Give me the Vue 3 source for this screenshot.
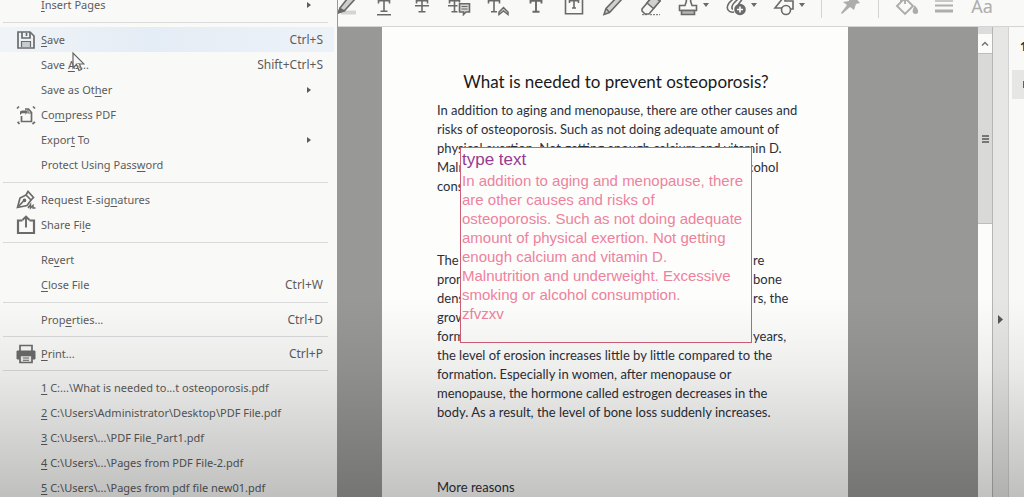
<script setup>
const menu = [
  { pre: '', key: 'I', post: 'nsert Pages', sub: true },
  { sep: true },
  { pre: '', key: 'S', post: 'ave', shortcut: 'Ctrl+S', icon: 'save', active: true },
  { pre: 'Save ', key: 'A', post: 's...', shortcut: 'Shift+Ctrl+S' },
  { pre: 'Save as Ot', key: 'h', post: 'er', sub: true },
  { pre: 'Co', key: 'm', post: 'press PDF', icon: 'compress' },
  { pre: 'Expor', key: 't', post: ' To', sub: true },
  { pre: 'Protect Using Pass', key: 'w', post: 'ord' },
  { sep: true },
  { pre: 'Request E-sig', key: 'n', post: 'atures', icon: 'sign' },
  { pre: 'Share Fi', key: 'l', post: 'e', icon: 'share' },
  { sep: true },
  { pre: 'Re', key: 'v', post: 'ert' },
  { pre: '', key: 'C', post: 'lose File', shortcut: 'Ctrl+W' },
  { sep: true },
  { pre: 'Prop', key: 'e', post: 'rties...', shortcut: 'Ctrl+D' },
  { sep: true, tight: true },
  { pre: '', key: 'P', post: 'rint...', shortcut: 'Ctrl+P', icon: 'print' },
  { sep: true, tight: true },
  { pre: '', key: '1', post: ' C:...\\What is needed to...t osteoporosis.pdf' },
  { pre: '', key: '2', post: ' C:\\Users\\Administrator\\Desktop\\PDF File.pdf' },
  { pre: '', key: '3', post: ' C:\\Users\\...\\PDF File_Part1.pdf' },
  { pre: '', key: '4', post: ' C:\\Users\\...\\Pages from PDF File-2.pdf' },
  { pre: '', key: '5', post: ' C:\\Users\\...\\Pages from pdf file new01.pdf' }
]

const textTools = ['highlight', 'underline', 'strike', 'replace', 'insert', 'text', 'textbox', 'pencil', 'eraser']
const dropTools = ['stamp', 'attach', 'shapes']

const intro = [
  'In addition to aging and menopause, there are other causes and',
  'risks of osteoporosis. Such as not doing adequate amount of',
  'physical exertion. Not getting enough calcium and vitamin D.',
  'Malnutrition and underweight. Excessive smoking or alcohol',
  'consumption.'
]
const wrapped = [
  ['The', 're'],
  ['pron', 'bone'],
  ['dens', 'rs, the'],
  ['grow', ''],
  ['form', 'years,']
]
const rest = [
  'the level of erosion increases little by little compared to the',
  'formation. Especially in women, after menopause or',
  'menopause, the hormone called estrogen decreases in the',
  'body. As a result, the level of bone loss suddenly increases.'
]
const note = [
  'In addition to aging and menopause, there',
  'are other causes and risks of',
  'osteoporosis. Such as not doing adequate',
  'amount of physical exertion. Not getting',
  'enough calcium and vitamin D.',
  'Malnutrition and underweight. Excessive',
  'smoking or alcohol consumption.',
  'zfvzxv'
]
</script>

<template>
  <div class="app">
    <nav class="menu" aria-label="File">
      <template v-for="(m, i) in menu" :key="i">
        <div v-if="m.sep" class="sep" :class="{ tight: m.tight }"></div>
        <button v-else class="item" :class="{ active: m.active }">
          <span class="slot">
            <svg v-if="m.icon" width="20" height="20" viewBox="0 0 20 20" fill="none" stroke="currentColor" stroke-width="1.7">
              <g v-if="m.icon === 'save'">
                <path d="M2 2H14L18 6V18H2Z" />
                <path d="M6 2V8H14V2M10.500 3V6" />
                <path d="M5.500 17V11.500H14.500V17" fill="#c9cccf" stroke-width="1.200" />
              </g>
              <g v-else-if="m.icon === 'compress'">
                <path d="M9 4H12.500L15.500 7.500V16.500H5.500V11" />
                <path d="M12 4V8H15.500" stroke-width="1.200" />
                <path d="M9.500 4L11.500 7L9.500 10V8.300H6L4 10V6.500L6 5.500H9.500Z" fill="currentColor" stroke="none" />
                <path d="M1 3.500L3 1.500M17 1.500L19 3.500M1.500 17L3.500 19M2.500 16.500V18.500M16.500 19L19 16.800" />
              </g>
              <g v-else-if="m.icon === 'sign'">
                <path d="M1.500 17.500L4 8L10 5L15 10L11 15.500Z" />
                <path d="M10 5L12 1.500L17.500 7.500L15 10M2 17L8 10.500" />
                <circle cx="8.500" cy="10.300" r="1" fill="currentColor" />
                <path d="M12 18L14.500 14.500V18L17 15.500V18H19.500" stroke-width="1.500" />
              </g>
              <g v-else-if="m.icon === 'share'" stroke-width="2.200">
                <path d="M6.500 5.500H2V18H18V5.500H13.500" />
                <path d="M10 12.500V2M6.500 5L10 1.500L13.500 5" stroke-width="1.900" />
              </g>
              <g v-else>
                <path d="M4 7V1.500H16V7" />
                <path d="M1 7H19V15H16V12H4V15H1Z" fill="currentColor" stroke-width="1" />
                <path d="M4 11.500H16V18.500H4Z" fill="#ededec" />
                <path d="M7 14H13M7 16.300H13" stroke-width="1" />
              </g>
            </svg>
          </span>
          <span class="label">{{ m.pre }}<u>{{ m.key }}</u>{{ m.post }}</span>
          <span v-if="m.shortcut" class="shortcut">{{ m.shortcut }}</span>
          <svg v-if="m.sub" class="arrow" width="4" height="6" viewBox="0 0 4 6"><path d="M0 0L4 3L0 6Z" fill="currentColor" /></svg>
        </button>
      </template>
    </nav>

    <main class="work">
      <header class="toolbar">
        <div class="group first">
          <button v-for="t in textTools" :key="t" class="tool" :aria-label="t">
            <svg width="24" height="24" viewBox="0 0 24 24" fill="none" stroke="currentColor" stroke-width="1.600">
              <g v-if="t === 'highlight'">
                <path d="M7 20.500H22" stroke="#d4d4d3" stroke-width="4" />
                <path d="M6 16L17 2L22 6L11 18L5 20.500Z" fill="#cfcfce" />
                <path d="M4 21L6 16.500L10 19Z" fill="currentColor" />
              </g>
              <path v-else-if="t === 'underline'" d="M6.500 11.500V8.800H17.500V11.500M12 9V19M8.500 19.200H15.500M5 22.700H19" />
              <path v-else-if="t === 'strike'" d="M6.500 11.500V8.800H17.500V11.500M12 9V20M8.500 19.700H15.500M5 13.700H19" />
              <g v-else-if="t === 'replace'">
                <path d="M1.500 11.500V8.800H11.500V10.500M6.500 9V20M3.500 19.700H9.500M0 13.700H9.500" />
                <path d="M11.500 11.800H21.500V20H18L15.500 22.500V20H11.500Z" fill="#d5d5d4" />
                <path d="M13.500 14.500H19.500M13.500 17H19.500" stroke-width="1.200" />
              </g>
              <g v-else-if="t === 'insert'">
                <path d="M2.500 11.500V8.800H13.500V11.500M8 9V20M5 19.700H11" />
                <path d="M13 22.500V20L17.500 15.500L22 20V22.500L17.500 19Z" fill="#d5d5d4" stroke-width="1.500" />
              </g>
              <path v-else-if="t === 'text'" d="M6.500 11.500V8.800H17.500V11.500M12 9V20M8.500 19.700H15.500" stroke-width="1.900" />
              <path v-else-if="t === 'textbox'" d="M3.500 4H20.500V21.700H3.500ZM7.500 11V8.800H16.500V11M12 9V16M10 16H14" />
              <path v-else-if="t === 'pencil'" d="M4 22.500L6 16.500L19 3L22 7L9.500 20.500ZM6 16.500L9.500 20.500" fill="#d0d0cf" />
              <g v-else>
                <path d="M4 17L15 4L22 9L11 22H7L4 19Z" fill="#f6f6f5" />
                <path d="M9 11L15.500 16.500L22 9L15 4Z" fill="#d0d0cf" />
                <path d="M4 22.700H9M12 22.700H22" stroke-width="1" stroke-dasharray="2 1" />
              </g>
            </svg>
          </button>
        </div>
        <div class="group second">
          <button v-for="t in dropTools" :key="t" class="drop" :aria-label="t">
            <svg width="24" height="24" viewBox="0 0 24 24" fill="none" stroke="currentColor" stroke-width="1.600">
              <g v-if="t === 'stamp'">
                <path d="M8.500 6A4 4 0 1 1 14.500 6L13.500 9L15 13.500H19.500V18.500H2.500V13.500H8L9.500 9Z" />
                <path d="M4.500 18.500H17.500V22.500H4.500Z" fill="#b5b5b4" />
              </g>
              <g v-else-if="t === 'attach'">
                <path d="M9 20C4 21 0 17 4 11L11 4M8 17C6 17 7 13 9 11L16 4M13 13L18 6" />
                <circle cx="15" cy="17.500" r="5" fill="#6d6d6d" stroke="currentColor" />
                <path d="M15 14.500V20.500M12 17.500H18" stroke="#fff" />
              </g>
              <g v-else>
                <path d="M10 6L2 16H10M12 5V9H20V17H17" />
                <circle cx="13" cy="18" r="4.500" fill="#f8f8f7" />
              </g>
            </svg>
            <svg class="caret" width="6" height="4" viewBox="0 0 6 4"><path d="M0 0H6L3 4Z" fill="currentColor" /></svg>
          </button>
        </div>
        <div class="bar"></div>
        <button class="pin" aria-label="pin">
          <svg width="24" height="24" viewBox="0 0 24 24" fill="currentColor"><path d="M12 6L16 4L22 11L18 12L16 18L12 15L4 22L3 21L9 13L5 10L11 9Z" /></svg>
        </button>
        <div class="bar"></div>
        <div class="group last">
          <button class="tool" aria-label="fill colour">
            <svg width="24" height="24" viewBox="0 0 24 24" fill="none" stroke="currentColor" stroke-width="1.900">
              <path d="M3 14L11 6L19 14L11 22ZM7 10V5H11V12" />
              <path d="M21 15C24 19 24 21 21.500 21C19 21 19 19 21 15Z" fill="currentColor" />
            </svg>
          </button>
          <button class="tool" aria-label="line width">
            <svg width="24" height="24" viewBox="0 0 24 24" fill="none" stroke="currentColor">
              <path d="M3 9H21" stroke-width="1.300" /><path d="M3 13.500H21" stroke-width="2" /><path d="M3 19H21" stroke-width="3" />
            </svg>
          </button>
          <button class="tool aa">Aa</button>
        </div>
      </header>

      <div class="body">
        <div class="canvas">
          <article class="page">
            <h1>What is needed to prevent osteoporosis?</h1>
            <p class="intro"><span v-for="l in intro" :key="l" class="line">{{ l }}</span></p>
            <p class="second-par">
              <span v-for="w in wrapped" :key="w[0]" class="line split"><span>{{ w[0] }}</span><span>{{ w[1] }}</span></span>
              <span v-for="l in rest" :key="l" class="line">{{ l }}</span>
            </p>
            <p class="more">More reasons</p>
            <div class="note">
              <div class="note-title">type text</div>
              <span v-for="l in note" :key="l" class="note-line">{{ l }}</span>
            </div>
          </article>
        </div>
        <div class="scroll">
          <button class="up" aria-label="scroll up">
            <svg width="8" height="5" viewBox="0 0 8 5" fill="none" stroke="#777" stroke-width="1.500"><path d="M1 4.500L4 1.500L7 4.500" /></svg>
          </button>
          <div class="thumb"><i></i><i></i><i></i></div>
        </div>
        <button class="splitter" aria-label="toggle panel">
          <svg width="5" height="9" viewBox="0 0 5 9"><path d="M0 0L5 4.500L0 9Z" fill="#555" /></svg>
        </button>
        <aside class="panel">
          <div class="count">1</div>
          <div class="card"><i></i></div>
        </aside>
      </div>
    </main>

    <div class="shade"></div>
    <svg class="cursor" width="13" height="20" viewBox="0 0 13 20"><path d="M1 1V16L4.500 12.500L7 18.500L9.500 17.500L7.500 12H12Z" fill="#f4f4f4" fill-opacity="0.400" stroke="#666" stroke-width="1.200" /></svg>
  </div>
</template>

<style>
body { margin: 0; overflow: hidden; }
</style>

<style scoped>
.app {
  position: relative;
  display: flex;
  height: 100vh;
  overflow: hidden;
  background: #f9f9f8;
  font-family: "Noto Sans", "Open Sans", sans-serif;
}
button {
  border: 0;
  padding: 0;
  background: none;
  color: inherit;
  font: inherit;
}
.menu {
  flex: 0 0 337px;
  border-right: 1px solid #9a9a9a;
  color: #5c5c5c;
  font-size: 12px;
}
.menu > :first-child { margin-top: -8px; }
.item {
  display: flex;
  align-items: center;
  width: 334px;
  height: 25px;
  padding: 0 11px 0 16px;
  text-align: left;
  white-space: pre;
}
.item.active { background: linear-gradient(90deg, #f0f4f8, #e4ecf5 45%, #edf2f8); }
.slot { display: flex; width: 25px; color: #6b6b6b; }
.label { flex: 1; font-size: 11px; }
u { text-underline-offset: 2px; }
.arrow { margin-right: 12px; }
.sep {
  height: 10px;
  margin: 0 9px 0 3px;
  background: linear-gradient(#dadada, #dadada) center / 100% 1px no-repeat;
}
.sep.tight { height: 9px; }
.work { flex: 1; display: flex; flex-direction: column; min-width: 0; }
.toolbar {
  display: flex;
  height: 26px;
  overflow: hidden;
  border-bottom: 1px solid #d4d4d4;
  color: #6a6a6a;
}
.group { display: flex; }
.first { margin-left: -11px; }
.second, .last { margin-left: 8px; }
.tool, .drop, .pin {
  flex: none;
  display: flex;
  align-items: center;
  justify-content: center;
  width: 38px;
  height: 24px;
  margin-top: -8px;
}
.drop { width: 48px; justify-content: flex-start; }
.caret { margin: 2px 0 0 2px; }
.pin { width: 56px; color: #adadad; }
.bar { width: 1px; height: 18px; background: #d4d4d4; }
.last { color: #adadad; }
.aa { height: 28px; font-size: 18px; }
.body { flex: 1; display: flex; min-height: 0; }
.canvas { flex: 1; display: flex; background: #989897; min-width: 0; }
.page {
  position: relative;
  flex: 1;
  min-width: 0;
  margin: 0 130px 0 44px;
  padding: 0 53px 0 55px;
  background: #fdfdfc;
  color: #2c2f38;
  font-family: Lato, sans-serif;
  font-size: 13px;
  line-height: 19px;
  white-space: nowrap;
}
h1 {
  margin: 43px 0 7px;
  color: #181a20;
  font-size: 17px;
  font-weight: 400;
  line-height: 24px;
  text-align: center;
}
p { margin: 0; }
.line { display: block; }
.split { display: grid; grid-template-columns: 316px 1fr; min-height: 19px; }
.second-par { margin-top: 55px; }
.more { margin-top: 56px; }
.note {
  position: absolute;
  top: 120px;
  left: 78px;
  width: 290px;
  height: 194px;
  padding-left: 1px;
  box-sizing: border-box;
  width: 292px;
  height: 196px;
  border: 1px solid #cf5f78;
  background: #fdfdfc;
  color: #ee829c;
  font-family: "Liberation Sans", Arial, sans-serif;
  font-size: 15px;
}
.note-title { color: #983a92; font-size: 17px; line-height: 23px; }
.note-line { display: block; }
.scroll {
  width: 14px;
  padding-top: 7px;
  border-right: 1px solid #b5b5b5;
  background: #fcfcfb;
  box-shadow: inset 0 7px #dcdcdc;
}
.up {
  display: flex;
  align-items: center;
  justify-content: center;
  width: 14px;
  height: 19px;
  background: #fbfbfa;
}
.thumb {
  display: flex;
  flex-direction: column;
  align-items: center;
  justify-content: center;
  gap: 1px;
  height: 169px;
  border: solid #bdbdbd;
  border-width: 1px 0;
  background: #d9d9d8;
}
.thumb i { width: 7px; height: 2px; background: #777; }
.splitter {
  display: flex;
  align-items: center;
  justify-content: center;
  width: 16px;
  padding-top: 114px;
  border-right: 1px solid #d2d2d2;
  background: #e6e6e5;
}
.panel { width: 15px; overflow: hidden; }
.count { margin: 11px 0 0 11px; color: #333; font-size: 12px; font-weight: 700; line-height: 18px; }
.card {
  display: flex;
  align-items: center;
  justify-content: flex-end;
  height: 29px;
  margin: 14px 0 0 3px;
  background: #e6e6e5;
}
.card i { width: 1px; height: 7px; background: #a5453c; }
.shade {
  position: absolute;
  inset: 60% 0 0;
  background: linear-gradient(rgba(0, 0, 0, 0), rgba(0, 0, 0, 0.060) 35%, rgba(0, 0, 0, 0.230));
  pointer-events: none;
}
.cursor { position: absolute; top: 52px; left: 72px; pointer-events: none; }
</style>
